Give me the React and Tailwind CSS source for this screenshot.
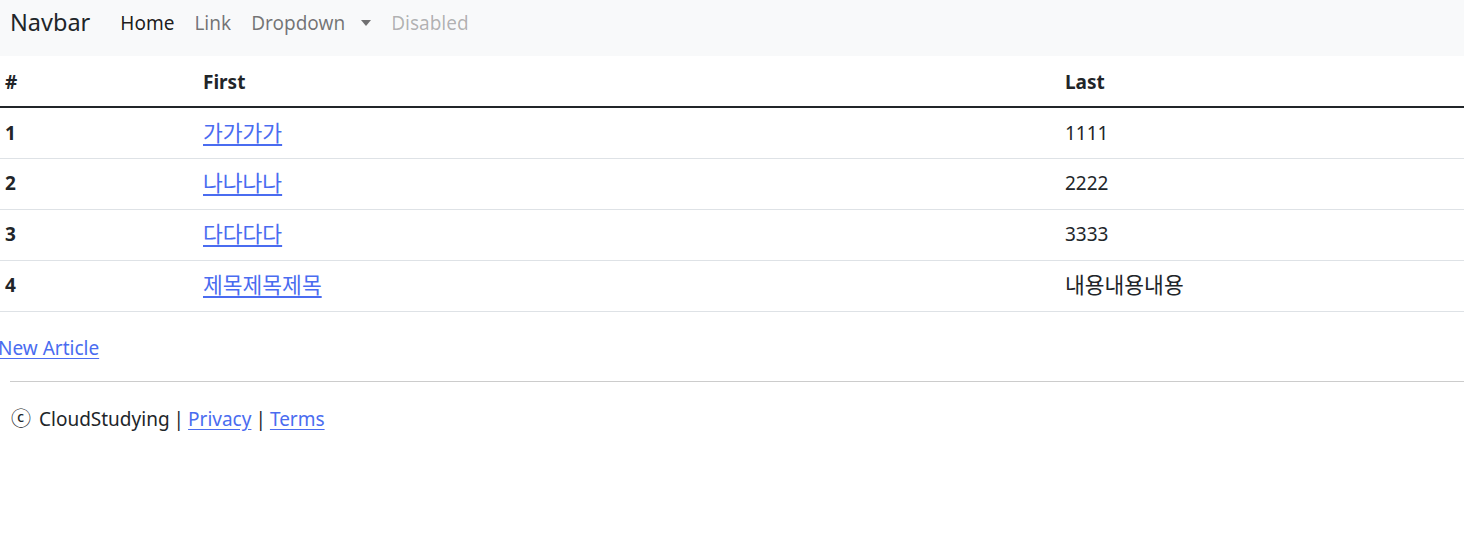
const FONT = "font-['Noto_Sans','Noto_Sans_CJK_KR',sans-serif]";

const rows = [
  { id: 1, first: '가가가가', last: '1111' },
  { id: 2, first: '나나나나', last: '2222' },
  { id: 3, first: '다다다다', last: '3333' },
  { id: 4, first: '제목제목제목', last: '내용내용내용' },
];

const LINK = 'text-[#4a6cf0] underline underline-offset-[3px]';

export default function App() {
  return (
    <div className={`${FONT} text-[#212529] text-[19px] min-h-[545px] bg-white overflow-hidden`}>
      {/* Navbar */}
      <nav className="h-14 bg-[#f8f9fa] flex items-center pl-[10px] pb-[10px]">
        <span className="text-[23.5px] mr-[30px]">Navbar</span>
        <ul className="flex items-center gap-[20px] text-[19px]">
          <li className="text-black/90">Home</li>
          <li className="text-black/55">Link</li>
          <li className="text-black/55 flex items-center">
            Dropdown
            <span className="ml-[16px] w-0 h-0 border-x-[5px] border-x-transparent border-t-[6px] border-t-black/55" />
          </li>
          <li className="text-black/30">Disabled</li>
        </ul>
      </nav>

      {/* Table */}
      <table className="w-full border-collapse">
        <thead>
          <tr className="border-b-2 border-[#212529] h-[51px]">
            <th className="text-left font-bold pl-[5px] pt-[2px] w-[191px]">#</th>
            <th className="text-left font-bold pl-3 pt-[2px] w-[862px]">First</th>
            <th className="text-left font-bold pl-3 pt-[2px]">Last</th>
          </tr>
        </thead>
        <tbody>
          {rows.map((r) => (
            <tr key={r.id} className="border-b border-[#dee2e6] h-[51px]">
              <th className="text-left font-bold pl-[5px]">{r.id}</th>
              <td className="pl-3 text-[21.5px]">
                <a href="#" className={LINK}>{r.first}</a>
              </td>
              <td className={`pl-3 ${r.id === 4 ? 'text-[21.5px]' : ''}`}>{r.last}</td>
            </tr>
          ))}
        </tbody>
      </table>

      <div className="mt-[22px] ml-[-2px]">
        <a href="#" className={LINK}>New Article</a>
      </div>

      {/* Footer */}
      <footer className="ml-[10px] mt-[19px]">
        <hr className="border-t border-[#cccccc]" />
        <p className="mt-[22px] flex items-center">
          <span className="ml-[1px] mr-[8px] text-[20px]">ⓒ</span>
          <span>CloudStudying</span>
          <span className="mx-[4px]">|</span>
          <a href="#" className={LINK}>Privacy</a>
          <span className="mx-[4px]">|</span>
          <a href="#" className={LINK}>Terms</a>
        </p>
      </footer>
    </div>
  );
}
